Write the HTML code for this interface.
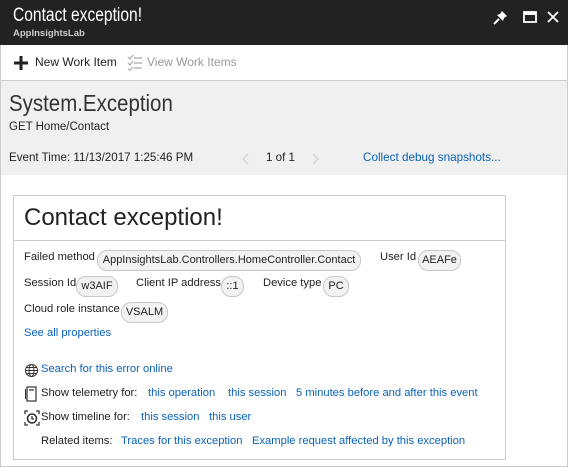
<!DOCTYPE html>
<html><head><meta charset="utf-8"><style>
*{margin:0;padding:0;box-sizing:border-box}
body{width:568px;height:467px;overflow:hidden;background:#fff;font-family:"Liberation Sans",sans-serif;color:#222;position:relative}
.a{position:absolute;white-space:nowrap}
.l{color:#0a62b8}
.pill{position:absolute;height:21px;border:1px solid #c8c8c8;background:#f2f2f2;border-radius:10px;font-size:11px;line-height:19px;padding:0;color:#222;white-space:nowrap;text-align:center}
.t{font-size:11.2px}
</style></head><body>
<div class="a" style="left:0;top:0;width:568px;height:45px;background:#222"></div>
<div class="a" style="left:13px;top:5px;font-size:19px;color:#fff;transform:scaleX(0.82);transform-origin:left">Contact exception!</div>
<div class="a" style="left:13px;top:28px;font-size:9.5px;font-weight:bold;color:#ccc">AppInsightsLab</div>
<svg class="a" style="left:490px;top:8px" width="72" height="20" viewBox="0 0 72 20">
<path d="M4 16 L9 11" stroke="#fff" stroke-width="2"/><path d="M7 7 L13 13 L14 10 L17 8 L12 3 L10 6 Z" fill="#fff"/>
<rect x="34" y="4" width="12" height="10" fill="none" stroke="#fff" stroke-width="1.8"/><rect x="34" y="4" width="12" height="3" fill="#fff"/>
<path d="M58 4 L68 14 M68 4 L58 14" stroke="#fff" stroke-width="1.8"/>
</svg>
<div class="a" style="left:0;top:45px;width:1px;height:422px;background:#ccc"></div>
<div class="a" style="left:567px;top:45px;width:1px;height:422px;background:#ccc"></div>
<div class="a" style="left:0;top:466px;width:568px;height:1px;background:#ccc"></div>
<svg class="a" style="left:13px;top:55px" width="16" height="16"><path d="M8 1V15M1 8H15" stroke="#222" stroke-width="3"/></svg>
<div class="a" style="left:35px;top:55px;font-size:12px">New Work Item</div>
<svg class="a" style="left:127px;top:54px" width="16" height="17" stroke="#aaa" fill="none" stroke-width="1.2"><path d="M1 3l2 2 3-4M1 9l2 2 3-4M1 15l2 1 3-3M7 4H15M7 9H15M7 14H15"/></svg>
<div class="a" style="left:147px;top:55px;color:#999;font-size:12px">View Work Items</div>
<div class="a" style="left:1px;top:80px;width:566px;height:95px;background:#f0f0f0;border-top:1px solid #ccc"></div>
<div class="a" style="left:9px;top:90px;font-size:23px;color:#333;transform:scaleX(0.89);transform-origin:left">System.Exception</div>
<div class="a" style="left:9px;top:121px;font-size:11.5px">GET Home/Contact</div>
<div class="a" style="left:9px;top:151px;font-size:11.6px">Event Time: 11/13/2017 1:25:46 PM</div>
<svg class="a" style="left:240px;top:152px" width="80" height="14" fill="none" stroke="#ccc" stroke-width="1"><path d="M8 2L3 7L8 12M73 2L78 7L73 12"/></svg>
<div class="a" style="left:266px;top:151px;font-size:11.6px">1 of 1</div>
<div class="a l" style="left:363px;top:151px;font-size:11.7px">Collect debug snapshots...</div>
<div class="a" style="left:13px;top:195px;width:493px;height:265px;border:1px solid #ccc"></div>
<div class="a" style="left:14px;top:240px;width:491px;height:1px;background:#ccc"></div>
<div class="a" style="left:24px;top:204px;font-size:24px">Contact exception!</div>
<div class="a t" style="left:24px;top:251px">Failed method</div>
<div class="pill" style="left:97px;top:250px;width:264px">AppInsightsLab.Controllers.HomeController.Contact</div>
<div class="a t" style="left:380px;top:251px">User Id</div>
<div class="pill" style="left:418px;top:250px;width:43px">AEAFe</div>
<div class="a t" style="left:24px;top:277px">Session Id</div>
<div class="pill" style="left:76px;top:276px;width:42px">w3AIF</div>
<div class="a t" style="left:136px;top:277px">Client IP address</div>
<div class="pill" style="left:221px;top:276px;width:23px">::1</div>
<div class="a t" style="left:263px;top:277px">Device type</div>
<div class="pill" style="left:323px;top:276px;width:26px">PC</div>
<div class="a t" style="left:24px;top:303px">Cloud role instance</div>
<div class="pill" style="left:121px;top:302px;width:47px">VSALM</div>
<div class="a t l" style="left:24px;top:327px">See all properties</div>
<svg class="a" style="left:24px;top:363px" width="15" height="15" fill="none" stroke="#333" stroke-width="1"><circle cx="7.5" cy="7.5" r="6"/><ellipse cx="7.5" cy="7.5" rx="2.5" ry="6"/><path d="M1.5 7.5H13.5M2.5 4.5H12.5M2.5 10.5H12.5"/></svg>
<div class="a t l" style="left:41px;top:363px">Search for this error online</div>
<svg class="a" style="left:25px;top:386px" width="13" height="16" fill="none" stroke="#333" stroke-width="1.2"><rect x="2" y="1" width="9" height="14"/><path d="M0.5 3V13M4 4H9"/></svg>
<div class="a t" style="left:41px;top:387px">Show telemetry for:</div>
<div class="a t l" style="left:148px;top:387px">this operation</div>
<div class="a t l" style="left:228px;top:387px">this session</div>
<div class="a t l" style="left:296px;top:387px">5 minutes before and after this event</div>
<svg class="a" style="left:24px;top:410px" width="16" height="16" fill="none" stroke="#333" stroke-width="1.3"><path d="M1 4V1H4M12 1H15V4M15 12V15H12M4 15H1V12"/><circle cx="8" cy="8.5" r="4.5" stroke-width="1.6"/><path d="M8 6V9H10"/></svg>
<div class="a t" style="left:41px;top:411px">Show timeline for:</div>
<div class="a t l" style="left:141px;top:411px">this session</div>
<div class="a t l" style="left:209px;top:411px">this user</div>
<div class="a t" style="left:41px;top:435px">Related items:</div>
<div class="a t l" style="left:121px;top:435px">Traces for this exception</div>
<div class="a t l" style="left:252px;top:435px">Example request affected by this exception</div>
</body></html>
